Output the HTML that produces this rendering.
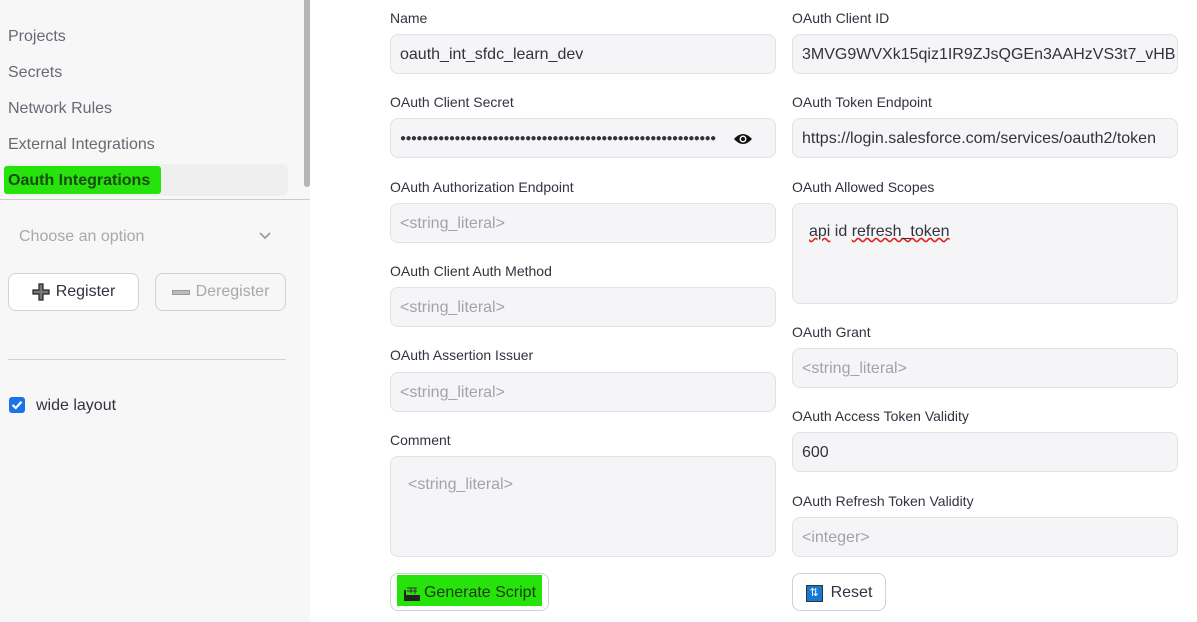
<!DOCTYPE html>
<html><head><meta charset="utf-8"><style>
*{box-sizing:border-box;margin:0;padding:0}
body{width:1197px;height:622px;overflow:hidden;background:#fff;font-family:"Liberation Sans",sans-serif;position:relative;color:#31333f}
.side{position:absolute;left:0;top:0;width:310px;height:622px;background:#f7f7f7}
.sb{position:absolute;left:304px;top:0;width:6px;height:187px;background:#b5b5b5;border-radius:0 0 3px 3px}
.nav{position:absolute;left:8px;font-size:16px;color:#666a73}
.hl{position:absolute;left:4px;top:166px;width:157px;height:28px;background:#27e30c;border-radius:3px}
.act{position:absolute;left:4px;top:164px;width:284px;height:32px;background:#efefef;border-radius:6px}
.line{position:absolute;height:1px;background:#d3d3d3}
.btn{position:absolute;height:38px;border:1px solid #d0d0d5;border-radius:8px;background:#fff;font-size:16px;display:flex;align-items:center;justify-content:center}
.lbl{position:absolute;font-size:14px;color:#31333f}
.in{position:absolute;height:40px;background:#f5f5f7;border:1px solid #e2e2e6;border-radius:8px;font-size:16px;padding:1px 9px 0;display:flex;align-items:center;color:#31333f;overflow:hidden;white-space:nowrap}
.ph{color:#a3a3a8}
.L{left:390px;width:386px}.R{left:792px;width:386px}
</style></head><body>
<div class="side">
<div class="sb"></div>
<div class="nav" style="top:28px">Projects</div>
<div class="nav" style="top:64px">Secrets</div>
<div class="nav" style="top:100px">Network Rules</div>
<div class="nav" style="top:136px">External Integrations</div>
<div class="act"></div>
<div class="hl"></div>
<div class="nav" style="top:172px;color:#1a4a10;font-weight:bold">Oauth Integrations</div>
<div class="line" style="left:0;top:199px;width:310px;background:#ccc"></div>
<div class="nav" style="left:19px;top:228px;color:#a8a8ad">Choose an option</div>
<svg style="position:absolute;left:259px;top:232px" width="12" height="8"><path d="M1 1 L6 6 L11 1" stroke="#999" stroke-width="1.6" fill="none"/></svg>
<div class="btn" style="left:8px;top:273px;width:131px;color:#31333f"><svg width="18" height="18" style="margin-right:6px"><path d="M7 1h4v6h6v4h-6v6h-4v-6h-6v-4h6z" fill="#777" stroke="#222" stroke-width="1.2"/></svg>Register</div>
<div class="btn" style="left:155px;top:273px;width:131px;color:#a8a8ad;background:#f7f7f7"><span style="display:inline-block;width:18px;height:5px;background:#bbb;border:1px solid #999;margin-right:6px"></span>Deregister</div>
<div class="line" style="left:8px;top:359px;width:278px"></div>
<div style="position:absolute;left:9px;top:397px;width:16px;height:16px;background:#1a73e8;border-radius:3px"><svg width="16" height="16"><path d="M3.5 8 L6.8 11 L12.5 4.8" stroke="#fff" stroke-width="2.2" fill="none"/></svg></div>
<div class="nav" style="left:36px;top:397px;color:#31333f">wide layout</div>
</div>

<div class="lbl" style="left:390px;top:10px">Name</div>
<div class="in L" style="top:34px">oauth_int_sfdc_learn_dev</div>
<div class="lbl" style="left:390px;top:94px">OAuth Client Secret</div>
<div class="in L" style="top:118px;font-size:10px;letter-spacing:-0.6px">●●●●●●●●●●●●●●●●●●●●●●●●●●●●●●●●●●●●●●●●●●●●●●●●●●●●●●●●●●
<svg style="position:absolute;right:22px;top:13px" width="20" height="14"><path d="M1 7 Q10 -3 19 7 Q10 17 1 7Z" fill="#111"/><circle cx="10" cy="7" r="3.5" fill="#f5f5f7"/><circle cx="10" cy="7" r="2" fill="#111"/></svg></div>
<div class="lbl" style="left:390px;top:179px">OAuth Authorization Endpoint</div>
<div class="in L ph" style="top:203px">&lt;string_literal&gt;</div>
<div class="lbl" style="left:390px;top:263px">OAuth Client Auth Method</div>
<div class="in L ph" style="top:287px">&lt;string_literal&gt;</div>
<div class="lbl" style="left:390px;top:347px">OAuth Assertion Issuer</div>
<div class="in L ph" style="top:372px">&lt;string_literal&gt;</div>
<div class="lbl" style="left:390px;top:432px">Comment</div>
<div class="in L ph" style="top:456px;height:101px;align-items:flex-start;padding:19px 17px">&lt;string_literal&gt;</div>
<div class="btn" style="left:390px;top:573px;width:159px"><span style="position:absolute;left:6px;top:1px;width:145px;height:31px;background:#27e30c"></span><span style="position:relative;color:#1a3a10;display:flex;align-items:center;margin-top:2px"><svg width="18" height="16" style="margin-right:3px"><rect x="1" y="10" width="16" height="6" fill="#222"/><rect x="1" y="5" width="2" height="5" fill="#222"/><path d="M4 3h10M4 6h10M8 3v5M12 3v6" stroke="#333" stroke-width="1"/></svg>Generate Script</span></div>

<div class="lbl" style="left:792px;top:10px">OAuth Client ID</div>
<div class="in R" style="top:34px">3MVG9WVXk15qiz1IR9ZJsQGEn3AAHzVS3t7_vHB</div>
<div class="lbl" style="left:792px;top:94px">OAuth Token Endpoint</div>
<div class="in R" style="top:118px">https://login.salesforce.com/services/oauth2/token</div>
<div class="lbl" style="left:792px;top:179px">OAuth Allowed Scopes</div>
<div class="in R" style="top:203px;height:101px;align-items:flex-start;padding:19px 16px"><span style="text-decoration:underline wavy #e02020">api</span>&nbsp;id&nbsp;<span style="text-decoration:underline wavy #e02020">refresh_token</span></div>
<div class="lbl" style="left:792px;top:324px">OAuth Grant</div>
<div class="in R ph" style="top:348px">&lt;string_literal&gt;</div>
<div class="lbl" style="left:792px;top:408px">OAuth Access Token Validity</div>
<div class="in R" style="top:432px">600</div>
<div class="lbl" style="left:792px;top:493px">OAuth Refresh Token Validity</div>
<div class="in R ph" style="top:517px">&lt;integer&gt;</div>
<div class="btn" style="left:792px;top:573px;width:94px;padding-top:2px"><span style="display:inline-block;width:17px;height:17px;background:#1877d2;border:1px solid #333;color:#fff;font-size:11px;text-align:center;line-height:15px;margin-right:8px">⇅</span>Reset</div>
</body></html>
